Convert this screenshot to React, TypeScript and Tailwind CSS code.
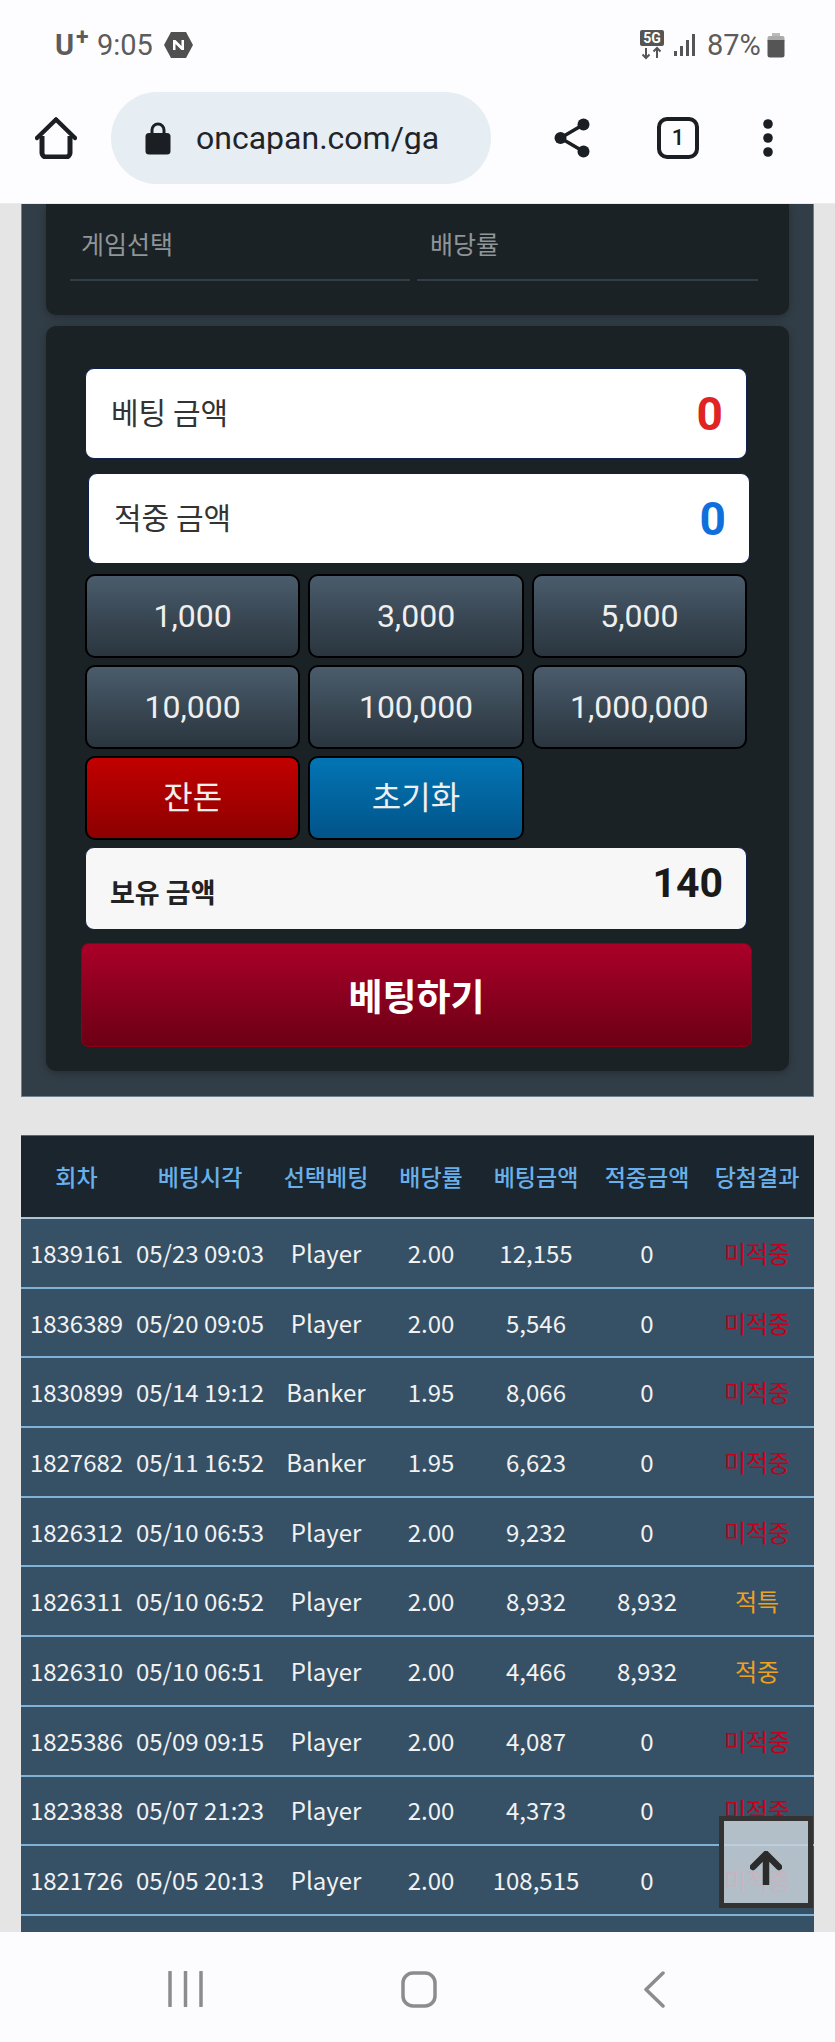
const rows: [string, string, string, string, string, string, string][] = [
  ["1839161", "05/23 09:03", "Player", "2.00", "12,155", "0", "미적중"],
  ["1836389", "05/20 09:05", "Player", "2.00", "5,546", "0", "미적중"],
  ["1830899", "05/14 19:12", "Banker", "1.95", "8,066", "0", "미적중"],
  ["1827682", "05/11 16:52", "Banker", "1.95", "6,623", "0", "미적중"],
  ["1826312", "05/10 06:53", "Player", "2.00", "9,232", "0", "미적중"],
  ["1826311", "05/10 06:52", "Player", "2.00", "8,932", "8,932", "적특"],
  ["1826310", "05/10 06:51", "Player", "2.00", "4,466", "8,932", "적중"],
  ["1825386", "05/09 09:15", "Player", "2.00", "4,087", "0", "미적중"],
  ["1823838", "05/07 21:23", "Player", "2.00", "4,373", "0", "미적중"],
  ["1821726", "05/05 20:13", "Player", "2.00", "108,515", "0", "미적중"],
];

const headers = ["회차", "베팅시각", "선택베팅", "배당률", "베팅금액", "적중금액", "당첨결과"];
const cols = "grid grid-cols-[111px_136px_116px_94px_116px_106px_114px]";
const sans = "font-['Roboto','Noto_Sans_CJK_KR',sans-serif]";
const cjk = "font-['Noto_Sans_CJK_KR',sans-serif]";

function StatusBar() {
  return (
    <div className={`flex h-[90px] items-center pl-[55px] text-[29px] text-[#5c5c5c] ${sans}`}>
      <span className="relative w-[42px] text-[29px] font-bold leading-none">
        U<span className="absolute left-[21px] top-[-5px] text-[23px]">+</span>
      </span>
      <span className="leading-none">9:05</span>
      <svg className="ml-[10px]" width="31" height="28" viewBox="0 0 31 28">
        <path d="M8 1h15l7 13-7 13H8L1 14z" fill="#505050" />
        <path d="M10 19V9h2.5l6 6V9H21v10h-2.5l-6-6v6z" fill="#fff" />
      </svg>
      <svg className="ml-[445px]" width="26" height="30" viewBox="0 0 26 30">
        <rect x="1" y="0" width="24" height="16" rx="2" fill="#555" />
        <text x="13" y="13" textAnchor="middle" fontSize="14" fontWeight="700" fontFamily="Roboto" fill="#fff">5G</text>
        <path d="M7 18v10M3.5 24.5 7 28l3.5-3.5M18 28V18M14.5 21.5 18 18l3.5 3.5" stroke="#555" strokeWidth="2" fill="none" />
      </svg>
      <svg className="ml-[9px]" width="22" height="24" viewBox="0 0 22 24">
        <rect x="0" y="18" width="3" height="5" fill="#555" />
        <rect x="6" y="13" width="3" height="10" fill="#555" />
        <rect x="12" y="7" width="3" height="16" fill="#555" />
        <rect x="18" y="1" width="3" height="22" fill="#555" />
      </svg>
      <span className="ml-[11px] leading-none">87%</span>
      <svg className="ml-[6px]" width="18" height="25" viewBox="0 0 18 25">
        <path d="M5 0h8v3H5z" fill="#bbb" />
        <rect x="0.5" y="3" width="17" height="6" rx="2" fill="#aaa" />
        <path d="M0.5 7h17v15a2.5 2.5 0 0 1-2.5 2.5H3A2.5 2.5 0 0 1 .5 22z" fill="#555" />
      </svg>
    </div>
  );
}

function Toolbar() {
  return (
    <div className="flex h-[92px] items-center mt-[2px] pl-[35px]">
      <svg width="42" height="42" viewBox="0 0 42 42">
        <path d="M2 21 21 2.5 40 21" fill="none" stroke="#1b1f23" strokeWidth="4.5" strokeLinecap="round" strokeLinejoin="round" />
        <path d="M7 19v17a4 4 0 0 0 4 4h20a4 4 0 0 0 4-4V19" fill="none" stroke="#1b1f23" strokeWidth="5" strokeLinejoin="round" />
      </svg>
      <div className="ml-[34px] flex h-[92px] w-[380px] items-center overflow-hidden rounded-[46px] bg-[#e6edf3] pl-[34px]">
        <svg className="shrink-0" width="26" height="33" viewBox="0 0 26 33">
          <path d="M7 12V8a6 6 0 0 1 12 0v4" fill="none" stroke="#1b1f23" strokeWidth="3" />
          <rect x="0.5" y="11" width="25" height="21.5" rx="3.5" fill="#1b1f23" />
        </svg>
        <span className={`ml-[25px] w-[278px] shrink-0 overflow-hidden whitespace-nowrap text-[32px] leading-none text-[#1f2429] ${sans}`}>
          oncapan.com/ga
        </span>
      </div>
      <svg className="ml-[63px]" width="37" height="40" viewBox="0 0 37 40">
        <path d="M6.5 20 29.5 6.5M6.5 20 29.5 33.5" stroke="#1b1f23" strokeWidth="3.5" />
        <circle cx="6.5" cy="20" r="6" fill="#1b1f23" />
        <circle cx="29.5" cy="6.5" r="6" fill="#1b1f23" />
        <circle cx="29.5" cy="33.5" r="6" fill="#1b1f23" />
      </svg>
      <div className={`ml-[66px] flex h-[42px] w-[42px] items-center justify-center rounded-[10px] border-[4.5px] border-[#1b1f23] text-[22px] font-medium leading-none text-[#1b1f23] ${sans}`}>
        1
      </div>
      <svg className="ml-[63px]" width="12" height="40" viewBox="0 0 12 40">
        <circle cx="6" cy="6" r="4.8" fill="#1b1f23" />
        <circle cx="6" cy="20" r="4.8" fill="#1b1f23" />
        <circle cx="6" cy="34" r="4.8" fill="#1b1f23" />
      </svg>
    </div>
  );
}

function AmountBox({ label, value, color, offset }: { label: string; value: string; color: string; offset?: boolean }) {
  return (
    <div className={`flex h-[91px] w-[662px] items-center justify-between rounded-[9px] border border-[#0d1f4d] bg-white pl-[25px] pr-[23px] ${offset ? "ml-[3px] mt-[14px]" : ""}`}>
      <span className={`text-[30px] leading-none text-[#333] mt-[-6px] ${cjk}`}>{label}</span>
      <span className={`text-[46px] font-bold leading-none ${color} ${sans}`}>{value}</span>
    </div>
  );
}

function ChipButton({ label, tone }: { label: string; tone?: "red" | "blue" }) {
  const bg =
    tone === "red"
      ? "bg-gradient-to-b from-[#c20000] to-[#8c0000]"
      : tone === "blue"
        ? "bg-gradient-to-b from-[#0375b4] to-[#015489]"
        : "bg-gradient-to-b from-[#4a5c6c] to-[#2a353e]";
  return (
    <button className={`flex h-[84px] items-center justify-center rounded-[10px] border-2 border-black text-[32px] leading-none text-[#efefef] ${bg} ${sans}`}>
      {label}
    </button>
  );
}

export default function App() {
  return (
    <div className="flex h-[2042px] w-[835px] flex-col overflow-hidden bg-[#e5e5e5]">
      <header className="h-[204px] shrink-0 border-b border-[#e6ecef] bg-[#fdfdff]">
        <StatusBar />
        <Toolbar />
      </header>

      <main className="relative min-h-0 flex-1 overflow-hidden">
        <section className="ml-[21px] h-[893px] w-[793px] border-x border-b border-[#6d8090] bg-[#323e47] pl-[24px] pr-[24px]">
          <div className="relative h-[111px] w-[743px] rounded-b-[10px] bg-[#1b2226] shadow-[0_2px_8px_rgba(0,0,0,0.3)]">
            <div className={`flex pl-[24px] ${cjk}`}>
              <div className="h-[77px] w-[340px] border-b-2 border-[#323e47] pl-[11px] pt-[20px] text-[25px] leading-[38px] text-[#8f9598]">
                게임선택
              </div>
              <div className="ml-[7px] h-[77px] w-[341px] border-b-2 border-[#323e47] pl-[13px] pt-[20px] text-[25px] leading-[38px] text-[#8f9598]">
                배당률
              </div>
            </div>
          </div>

          <div className="mt-[11px] h-[745px] w-[743px] rounded-[10px] bg-[#1b2226] pl-[39px] pt-[42px] shadow-[0_2px_8px_rgba(0,0,0,0.3)]">
            <AmountBox label="베팅 금액" value="0" color="text-[#e02424]" />
            <AmountBox label="적중 금액" value="0" color="text-[#0f6fdc]" offset />

            <div className="mt-[10px] grid w-[662px] grid-cols-3 gap-x-[8px] gap-y-[7px]">
              <ChipButton label="1,000" />
              <ChipButton label="3,000" />
              <ChipButton label="5,000" />
              <ChipButton label="10,000" />
              <ChipButton label="100,000" />
              <ChipButton label="1,000,000" />
              <ChipButton label="잔돈" tone="red" />
              <ChipButton label="초기화" tone="blue" />
            </div>

            <div className="mt-[7px] flex h-[83px] w-[662px] items-center justify-between rounded-[9px] border border-[#0d1f4d] bg-[#f7f7f7] pl-[24px] pr-[23px]">
              <span className={`mt-[6px] text-[27px] font-bold leading-none text-[#222] ${cjk}`}>보유 금액</span>
              <span className={`mt-[-10px] text-[41px] font-bold leading-none text-[#1a1a1a] ${sans}`}>140</span>
            </div>

            <button className={`ml-[-4px] mt-[13px] flex h-[104px] w-[671px] items-center justify-center rounded-[8px] border border-[#8f0014] bg-gradient-to-b from-[#ab0029] to-[#6c0015] text-[37px] font-bold leading-none text-white ${cjk}`}>
              베팅하기
            </button>
          </div>
        </section>

        <section className={`ml-[21px] mt-[38px] w-[793px] ${cjk}`}>
          <div className={`${cols} h-[84px] items-center border-t border-[#5a6670] border-b-2 border-b-[#a9c5d6] bg-[#1a252e] text-[23px] font-medium text-[#69b0ea]`}>
            {headers.map((h) => (
              <div key={h} className="whitespace-nowrap text-center">{h}</div>
            ))}
          </div>
          {rows.map((r) => (
            <div key={r[0]} className={`${cols} h-[69.7px] items-center border-b-2 border-[#7fb2d6] bg-[#365166] text-[24px] text-[#f2f2f2]`}>
              {r.map((c, i) => (
                <div
                  key={i}
                  className={`whitespace-nowrap text-center ${
                    i === 6 ? (c === "미적중" ? "text-[#c4001a]" : "text-[#f0a020]") : ""
                  }`}
                >
                  {c}
                </div>
              ))}
            </div>
          ))}
          <div className="h-[40px] bg-[#365166]" />
        </section>

        <button className="absolute left-[719px] top-[1612px] flex h-[92px] w-[94px] items-center justify-center border-[5px] border-[#333] bg-[#c8d2da]/85">
          <svg width="32" height="34" viewBox="0 0 32 34" className="mt-[12px]">
            <path d="M16 3 3 16M16 3l13 13M16 5v28" fill="none" stroke="#2b2b2b" strokeWidth="6.5" strokeLinecap="round" strokeLinejoin="round" />
          </svg>
        </button>
      </main>

      <footer className="flex h-[110px] shrink-0 items-start bg-[#fcfcfe] pt-[39px]">
        <svg className="ml-[168px]" width="35" height="36" viewBox="0 0 35 36">
          <path d="M2 1v34M17.5 1v34M33 1v34" stroke="#8c8c8c" strokeWidth="3.5" strokeLinecap="round" />
        </svg>
        <svg className="ml-[198px]" width="36" height="37" viewBox="0 0 36 37">
          <rect x="2" y="2" width="32" height="33" rx="10" fill="none" stroke="#8c8c8c" strokeWidth="3.5" />
        </svg>
        <svg className="ml-[205px]" width="24" height="37" viewBox="0 0 24 37">
          <path d="M21 2 4 18.5 21 35" fill="none" stroke="#8c8c8c" strokeWidth="3.5" strokeLinecap="round" strokeLinejoin="round" />
        </svg>
      </footer>
    </div>
  );
}
